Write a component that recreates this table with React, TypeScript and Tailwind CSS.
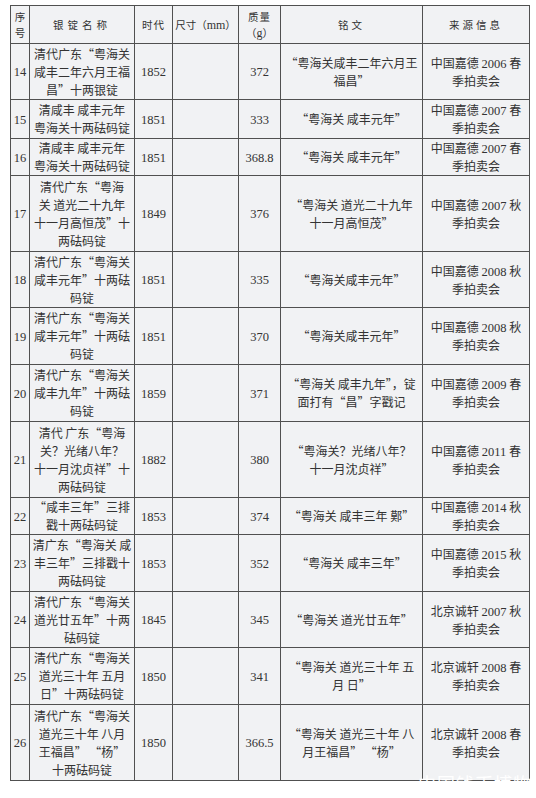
import React from "react";

type Row = {
  no: string;
  name: string[];
  year: string;
  weight: string;
  ins: string[];
  src: string[];
  h: string;
};

const rows: Row[] = [
  { no: "14", name: ["清代广东“粤海关", "咸丰二年六月王福", "昌”十两银锭"], year: "1852", weight: "372", ins: ["“粤海关咸丰二年六月王", "福昌”"], src: ["中国嘉德 2006 春", "季拍卖会"], h: "h-[56px]" },
  { no: "15", name: ["清咸丰 咸丰元年", "粤海关十两砝码锭"], year: "1851", weight: "333", ins: ["“粤海关 咸丰元年”"], src: ["中国嘉德 2007 春", "季拍卖会"], h: "h-[39px]" },
  { no: "16", name: ["清咸丰 咸丰元年", "粤海关十两砝码锭"], year: "1851", weight: "368.8", ins: ["“粤海关 咸丰元年”"], src: ["中国嘉德 2007 春", "季拍卖会"], h: "h-[37px]" },
  { no: "17", name: ["清代广东“粤海", "关 道光二十九年", "十一月高恒茂”十", "两砝码锭"], year: "1849", weight: "376", ins: ["“粤海关 道光二十九年", "十一月高恒茂”"], src: ["中国嘉德 2007 秋", "季拍卖会"], h: "h-[76px]" },
  { no: "18", name: ["清代广东“粤海关", "咸丰元年”十两砝", "码锭"], year: "1851", weight: "335", ins: ["“粤海关咸丰元年”"], src: ["中国嘉德 2008 秋", "季拍卖会"], h: "h-[56px]" },
  { no: "19", name: ["清代广东“粤海关", "咸丰元年”十两砝", "码锭"], year: "1851", weight: "370", ins: ["“粤海关咸丰元年”"], src: ["中国嘉德 2008 秋", "季拍卖会"], h: "h-[57px]" },
  { no: "20", name: ["清代广东“粤海关", "咸丰九年”十两砝", "码锭"], year: "1859", weight: "371", ins: ["“粤海关 咸丰九年”，锭", "面打有“昌”字戳记"], src: ["中国嘉德 2009 春", "季拍卖会"], h: "h-[57px]" },
  { no: "21", name: ["清代 广东“粤海", "关？光绪八年？", "十一月沈贞祥”十", "两砝码锭"], year: "1882", weight: "380", ins: ["“粤海关？光绪八年？", "十一月沈贞祥”"], src: ["中国嘉德 2011 春", "季拍卖会"], h: "h-[76px]" },
  { no: "22", name: ["“咸丰三年”三排", "戳十两砝码锭"], year: "1853", weight: "374", ins: ["“粤海关 咸丰三年 鄚”"], src: ["中国嘉德 2014 秋", "季拍卖会"], h: "h-[37px]" },
  { no: "23", name: ["清广东“粤海关 咸", "丰三年”三排戳十", "两砝码锭"], year: "1853", weight: "352", ins: ["“粤海关 咸丰三年”"], src: ["中国嘉德 2015 秋", "季拍卖会"], h: "h-[57px]" },
  { no: "24", name: ["清代广东“粤海关", "道光廿五年”十两", "砝码锭"], year: "1845", weight: "345", ins: ["“粤海关 道光廿五年”"], src: ["北京诚轩 2007 秋", "季拍卖会"], h: "h-[56px]" },
  { no: "25", name: ["清代广东“粤海关", "道光三十年 五月", "日”十两砝码锭"], year: "1850", weight: "341", ins: ["“粤海关 道光三十年 五", "月 日”"], src: ["北京诚轩 2008 春", "季拍卖会"], h: "h-[57px]" },
  { no: "26", name: ["清代广东“粤海关", "道光三十年 八月", "王福昌” “杨”", "十两砝码锭"], year: "1850", weight: "366.5", ins: ["“粤海关 道光三十年 八", "月王福昌” “杨”"], src: ["北京诚轩 2008 春", "季拍卖会"], h: "h-[76px]" },
];

const cjk = { fontFamily: '"Noto Sans CJK SC", "Noto Sans", sans-serif' };
const serif = { fontFamily: '"Liberation Serif", "Noto Sans CJK SC", serif' };

function Mixed({ text }: { text: string }) {
  const parts = text.split(/(\d+)/);
  return (
    <>
      {parts.map((p, i) =>
        /^\d+$/.test(p) ? (
          <span key={i} style={serif} className="text-[12.5px] leading-[18px]">
            {p}
          </span>
        ) : (
          <span key={i}>{p}</span>
        )
      )}
    </>
  );
}

function Lines({ lines }: { lines: string[] }) {
  return (
    <div className="flex flex-col items-center">
      {lines.map((l, i) => (
        <div key={i} className="whitespace-pre leading-[18px] h-[18px]">
          <Mixed text={l} />
        </div>
      ))}
    </div>
  );
}

const td = "border border-[#505050] bg-[#f1f2f4] text-center align-middle p-0 leading-[18px]";
const th = "border border-[#505050] bg-[#f1f2f4] text-center align-middle p-0 font-normal text-[10.5px] leading-[16px] text-[#333]";

export default function App() {
  return (
    <div className="relative w-[536px] h-[798px] overflow-hidden bg-white pl-[10px] pt-[5px] text-[#333] text-[12px]" style={cjk}>
      <table className="table-fixed border-collapse w-[519px]">
        <colgroup>
          <col className="w-[19px]" />
          <col className="w-[105px]" />
          <col className="w-[38px]" />
          <col className="w-[66px]" />
          <col className="w-[42px]" />
          <col className="w-[142px]" />
          <col className="w-[107px]" />
        </colgroup>
        <thead>
          <tr className="h-[38px]">
            <th className={th}>
              <div>序</div>
              <div>号</div>
            </th>
            <th className={th}>
              <span className="tracking-[4px]">银锭名称</span>
            </th>
            <th className={th}>
              <span className="tracking-[1px]">时代</span>
            </th>
            <th className={th}>
              <span className="whitespace-nowrap">
                尺寸（<span style={serif} className="text-[12px]">mm</span>）
              </span>
            </th>
            <th className={th}>
              <div className="tracking-[1px]">质量</div>
              <div>
                （<span style={serif} className="text-[12px]">g</span>）
              </div>
            </th>
            <th className={th}>
              <span className="tracking-[3px]">铭文</span>
            </th>
            <th className={th}>
              <span className="tracking-[3px]">来源信息</span>
            </th>
          </tr>
        </thead>
        <tbody>
          {rows.map((r) => (
            <tr key={r.no} className={r.h}>
              <td className={td}>
                <span style={serif} className="text-[12.5px]">{r.no}</span>
              </td>
              <td className={td}>
                <Lines lines={r.name} />
              </td>
              <td className={td}>
                <span style={serif} className="text-[12.5px]">{r.year}</span>
              </td>
              <td className={td}></td>
              <td className={td}>
                <span style={serif} className="text-[12.5px]">{r.weight}</span>
              </td>
              <td className={td}>
                <Lines lines={r.ins} />
              </td>
              <td className={td}>
                <Lines lines={r.src} />
              </td>
            </tr>
          ))}
        </tbody>
      </table>
      <div className="absolute left-[418px] top-[772px] text-[18px] leading-[22px] text-white tracking-[1px] whitespace-nowrap">
        中国钱币博物馆
      </div>
    </div>
  );
}
